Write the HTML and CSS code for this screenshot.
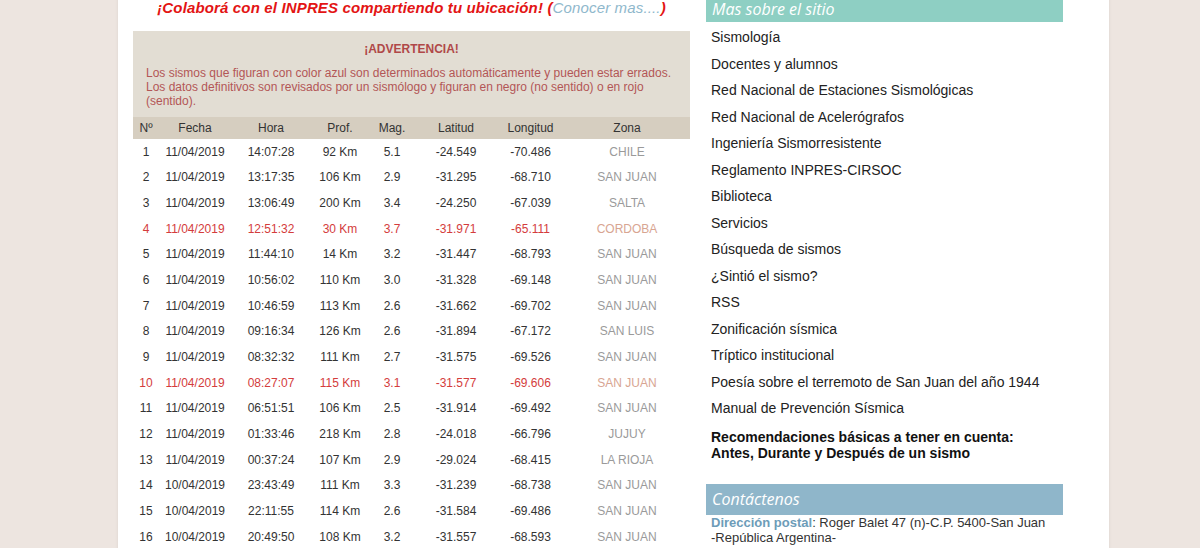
FILE: index.html
```html
<!DOCTYPE html>
<html lang="es">
<head>
    <meta charset="UTF-8">
    <meta name="viewport" content="width=device-width, initial-scale=1.0">
    <title>INPRES - Últimos sismos</title>
    <link rel="stylesheet" href="styles.css">
</head>
<body>
    <div class="page">
        <div class="main">
            <p class="colabora">¡Colaborá con el INPRES compartiendo tu ubicación! (<a href="#">Conocer mas....</a>)</p>

            <div class="advertencia">
                <h3>¡ADVERTENCIA!</h3>
                <p>Los sismos que figuran con color azul son determinados automáticamente y pueden estar errados. Los datos definitivos son revisados por un sismólogo y figuran en negro (no sentido) o en rojo (sentido).</p>
            </div>

            <table class="sismos">
                <thead>
                    <tr>
                        <th class="c-num">Nº</th>
                        <th class="c-fecha">Fecha</th>
                        <th class="c-hora">Hora</th>
                        <th class="c-prof">Prof.</th>
                        <th class="c-mag">Mag.</th>
                        <th class="c-lat">Latitud</th>
                        <th class="c-lon">Longitud</th>
                        <th class="c-zona">Zona</th>
                    </tr>
                </thead>
                <tbody>
                    <tr><td>1</td><td>11/04/2019</td><td>14:07:28</td><td>92 Km</td><td>5.1</td><td>-24.549</td><td>-70.486</td><td class="zona">CHILE</td></tr>
                    <tr><td>2</td><td>11/04/2019</td><td>13:17:35</td><td>106 Km</td><td>2.9</td><td>-31.295</td><td>-68.710</td><td class="zona">SAN JUAN</td></tr>
                    <tr><td>3</td><td>11/04/2019</td><td>13:06:49</td><td>200 Km</td><td>3.4</td><td>-24.250</td><td>-67.039</td><td class="zona">SALTA</td></tr>
                    <tr class="sentido"><td>4</td><td>11/04/2019</td><td>12:51:32</td><td>30 Km</td><td>3.7</td><td>-31.971</td><td>-65.111</td><td class="zona">CORDOBA</td></tr>
                    <tr><td>5</td><td>11/04/2019</td><td>11:44:10</td><td>14 Km</td><td>3.2</td><td>-31.447</td><td>-68.793</td><td class="zona">SAN JUAN</td></tr>
                    <tr><td>6</td><td>11/04/2019</td><td>10:56:02</td><td>110 Km</td><td>3.0</td><td>-31.328</td><td>-69.148</td><td class="zona">SAN JUAN</td></tr>
                    <tr><td>7</td><td>11/04/2019</td><td>10:46:59</td><td>113 Km</td><td>2.6</td><td>-31.662</td><td>-69.702</td><td class="zona">SAN JUAN</td></tr>
                    <tr><td>8</td><td>11/04/2019</td><td>09:16:34</td><td>126 Km</td><td>2.6</td><td>-31.894</td><td>-67.172</td><td class="zona">SAN LUIS</td></tr>
                    <tr><td>9</td><td>11/04/2019</td><td>08:32:32</td><td>111 Km</td><td>2.7</td><td>-31.575</td><td>-69.526</td><td class="zona">SAN JUAN</td></tr>
                    <tr class="sentido"><td>10</td><td>11/04/2019</td><td>08:27:07</td><td>115 Km</td><td>3.1</td><td>-31.577</td><td>-69.606</td><td class="zona">SAN JUAN</td></tr>
                    <tr><td>11</td><td>11/04/2019</td><td>06:51:51</td><td>106 Km</td><td>2.5</td><td>-31.914</td><td>-69.492</td><td class="zona">SAN JUAN</td></tr>
                    <tr><td>12</td><td>11/04/2019</td><td>01:33:46</td><td>218 Km</td><td>2.8</td><td>-24.018</td><td>-66.796</td><td class="zona">JUJUY</td></tr>
                    <tr><td>13</td><td>11/04/2019</td><td>00:37:24</td><td>107 Km</td><td>2.9</td><td>-29.024</td><td>-68.415</td><td class="zona">LA RIOJA</td></tr>
                    <tr><td>14</td><td>10/04/2019</td><td>23:43:49</td><td>111 Km</td><td>3.3</td><td>-31.239</td><td>-68.738</td><td class="zona">SAN JUAN</td></tr>
                    <tr><td>15</td><td>10/04/2019</td><td>22:11:55</td><td>114 Km</td><td>2.6</td><td>-31.584</td><td>-69.486</td><td class="zona">SAN JUAN</td></tr>
                    <tr><td>16</td><td>10/04/2019</td><td>20:49:50</td><td>108 Km</td><td>3.2</td><td>-31.557</td><td>-68.593</td><td class="zona">SAN JUAN</td></tr>
                </tbody>
            </table>
        </div>

        <div class="sidebar">
            <h2 class="box-title sitio">Mas sobre el sitio</h2>
            <ul class="links">
                <li><a href="#">Sismología</a></li>
                <li><a href="#">Docentes y alumnos</a></li>
                <li><a href="#">Red Nacional de Estaciones Sismológicas</a></li>
                <li><a href="#">Red Nacional de Acelerógrafos</a></li>
                <li><a href="#">Ingeniería Sismorresistente</a></li>
                <li><a href="#">Reglamento INPRES-CIRSOC</a></li>
                <li><a href="#">Biblioteca</a></li>
                <li><a href="#">Servicios</a></li>
                <li><a href="#">Búsqueda de sismos</a></li>
                <li><a href="#">¿Sintió el sismo?</a></li>
                <li><a href="#">RSS</a></li>
                <li><a href="#">Zonificación sísmica</a></li>
                <li><a href="#">Tríptico institucional</a></li>
                <li><a href="#">Poesía sobre el terremoto de San Juan del año 1944</a></li>
                <li><a href="#">Manual de Prevención Sísmica</a></li>
            </ul>
            <p class="recomendaciones"><a href="#">Recomendaciones básicas a tener en cuenta:<br>Antes, Durante y Después de un sismo</a></p>

            <h2 class="box-title contacto">Contáctenos</h2>
            <p class="direccion"><b>Dirección postal</b>: Roger Balet 47 (n)-C.P. 5400-San Juan<br>-República Argentina-</p>
        </div>
    </div>
</body>
</html>
```

FILE: styles.css
```css
html, body {
    height: 100%;
}

body {
    margin: 0;
    background-color: #ede5e0;
    font-family: "Liberation Sans", Arial, sans-serif;
    color: #333;
    overflow: hidden;
}

a {
    color: inherit;
    text-decoration: none;
}

/* white page column */
.page {
    display: flex;
    align-items: flex-start;
    gap: 16px;
    width: 930px;
    min-height: 100%;
    margin: -9px 0 0 118px;
    padding: 0 46px 0 15px;
    background: #fff;
    box-shadow: 0 0 3px rgba(0, 0, 0, 0.08);
}

.main {
    width: 557px;
    flex-shrink: 0;
}

.colabora {
    margin: 0;
    padding: 7px 0 13px;
    line-height: 20px;
    text-align: center;
    white-space: nowrap;
    font-family: "Comic Sans MS", "Liberation Sans", sans-serif;
    font-size: 15px;
    letter-spacing: 0.15px;
    font-weight: bold;
    font-style: italic;
    color: #e31414;
}

.colabora a {
    color: #8fb8cc;
    font-weight: normal;
}

.advertencia {
    background: #e2ddd3;
    padding: 11px 13px 9px;
    color: #b35656;
    font-size: 12px;
    line-height: 14px;
}

.advertencia h3 {
    margin: 0;
    font-size: 12px;
    text-align: center;
    color: #b04848;
}

.advertencia p {
    margin: 10px 0 0;
}

/* listado de sismos */
.sismos {
    width: 557px;
    border-collapse: collapse;
    table-layout: fixed;
    font-size: 12px;
    text-align: center;
}

.sismos th {
    height: 22px;
    padding: 0;
    background: #d6cec0;
    font-weight: normal;
    color: #333;
}

.sismos td {
    height: 25.67px;
    padding: 0;
    color: #333;
}

.c-num { width: 26px; }
.c-fecha { width: 72px; }
.c-hora { width: 80px; }
.c-prof { width: 58px; }
.c-mag { width: 46px; }
.c-lat { width: 82px; }
.c-lon { width: 67px; }

.sismos td.zona {
    color: #9a9a9a;
}

.sismos tr.sentido td {
    color: #d43c3c;
}

.sismos tr.sentido td.zona {
    color: #d8a592;
}

/* columna derecha */
.sidebar {
    width: 357px;
    flex-shrink: 0;
    font-size: 14px;
    color: #222;
}

.box-title {
    margin: 0;
    height: 31px;
    line-height: 31px;
    padding-left: 6px;
    font-family: "Open Sans", sans-serif;
    font-size: 16px;
    font-weight: normal;
    font-style: italic;
    color: #fff;
}

.sitio {
    height: 27px;
    padding-top: 4px;
    line-height: 29px;
    background: #8ecfc3;
}

.contacto {
    margin-top: 23px;
    background: #8fb6ca;
}

.links {
    list-style: none;
    margin: 0;
    padding: 2px 0 0 5px;
}

.links li {
    line-height: 26.5px;
}

.recomendaciones {
    margin: 7px 0 0;
    padding-left: 5px;
    line-height: 16px;
    font-weight: bold;
    color: #111;
}

.direccion {
    margin: 0;
    padding-left: 5px;
    line-height: 15px;
    font-size: 13px;
    color: #333;
}

.direccion b {
    color: #6d9cb8;
}
```
